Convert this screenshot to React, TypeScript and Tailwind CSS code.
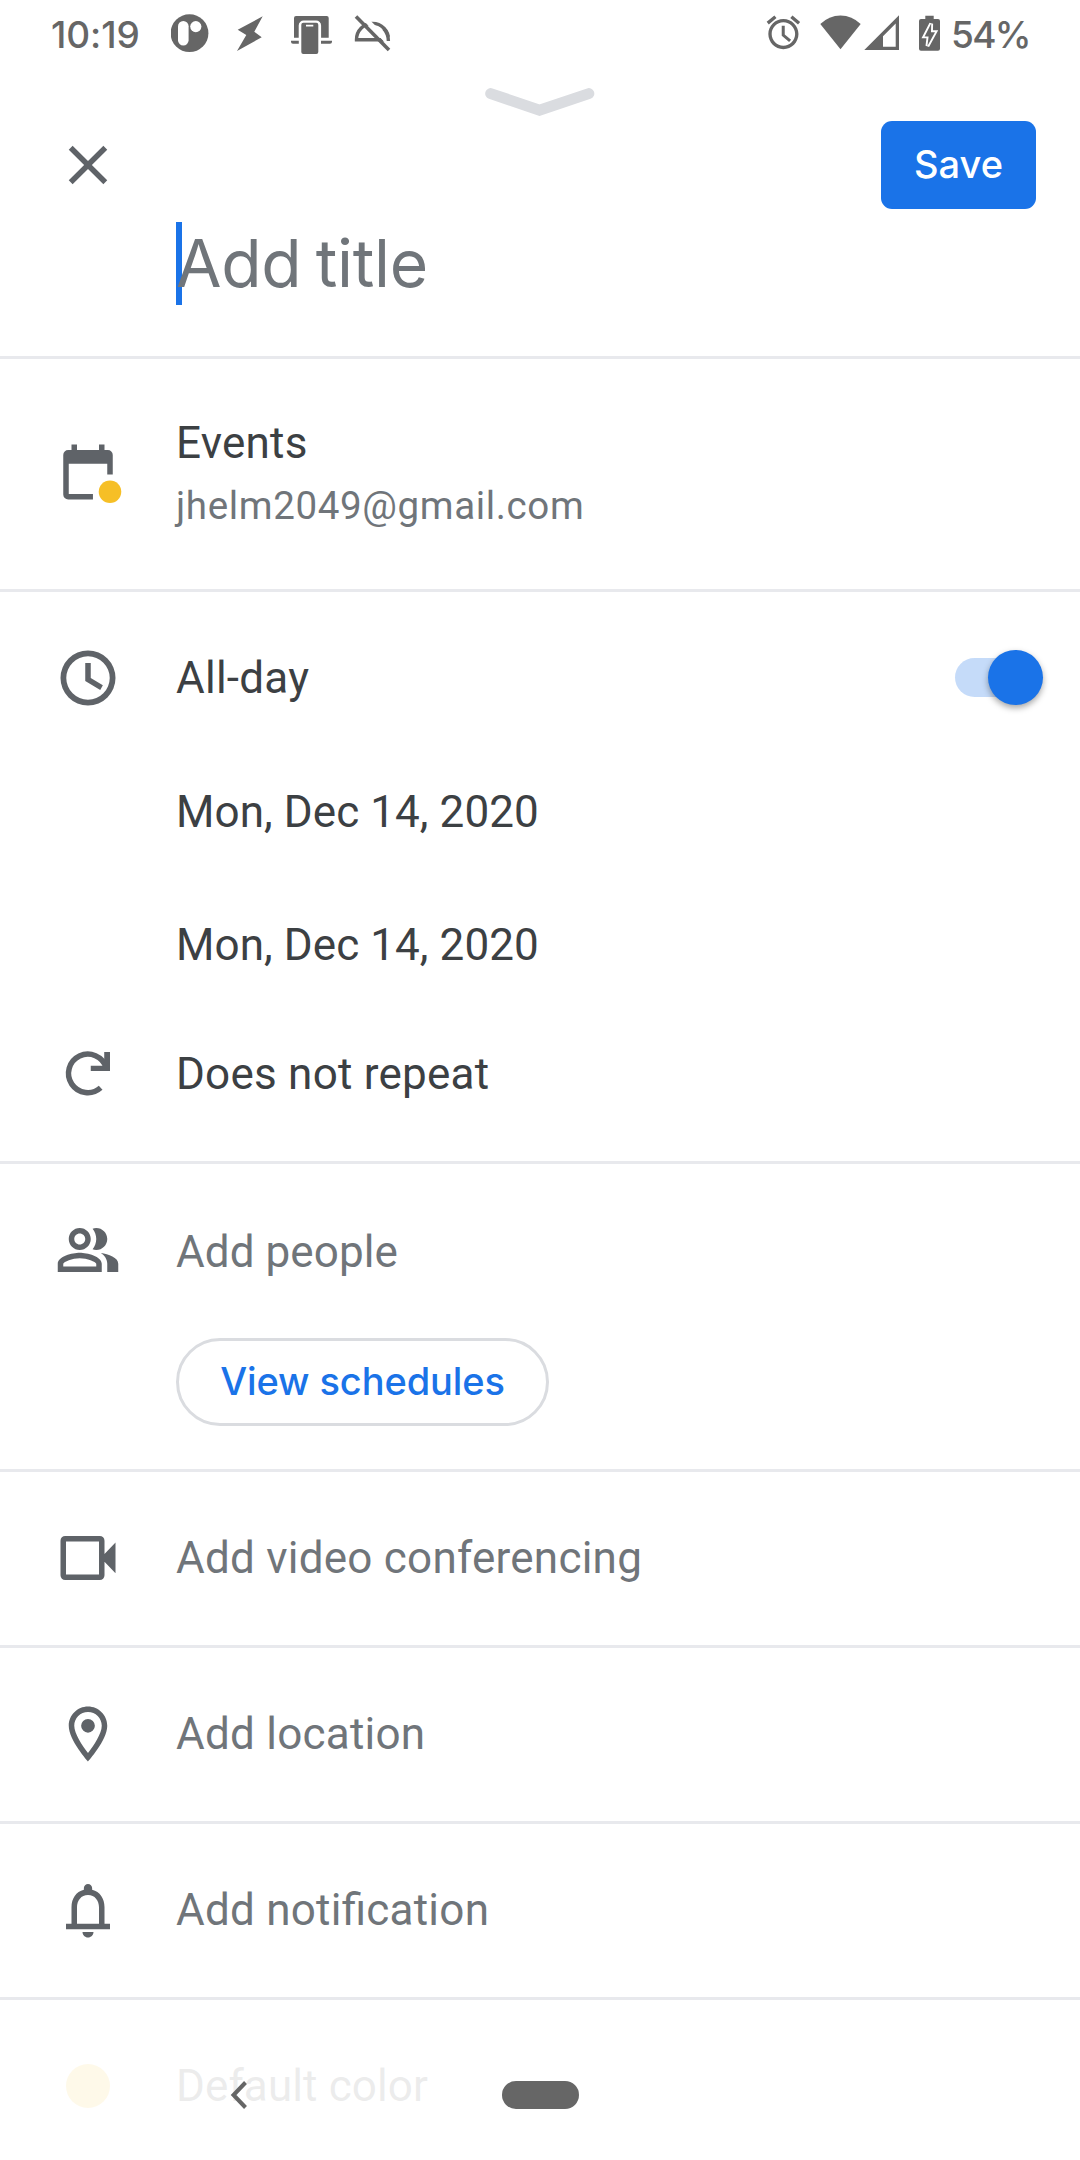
import type { ReactNode } from "react";

function Glyph({ d, className = "" }: { d: string; className?: string }) {
  return (
    <svg viewBox="0 0 24 24" className={`h-[66px] w-[66px] fill-[#5f6368] ${className}`}>
      <path fillRule="evenodd" d={d} />
    </svg>
  );
}

const icons = {
  close:
    "M19 6.41L17.59 5 12 10.59 6.41 5 5 6.41 10.59 12 5 17.59 6.41 19 12 13.41 17.59 19 19 17.59 13.41 12z",
  clock:
    "M12 2a10 10 0 1 0 0 20a10 10 0 1 0 0-20zM12 4.1a7.9 7.9 0 1 1 0 15.8a7.9 7.9 0 1 1 0-15.8zM11 6.5h2v5.5l4.4 2.6-.95 1.75L11 13.1z",
  people:
    "M16.67 13.13C18.04 14.06 19 15.32 19 17v3h4v-3c0-2.18-3.57-3.47-6.33-3.87zM15 12c2.21 0 4-1.79 4-4s-1.79-4-4-4c-.47 0-.91.1-1.33.24C14.5 5.27 15 6.58 15 8s-.5 2.73-1.33 3.76c.42.14.86.24 1.33.24zM9 12c2.21 0 4-1.79 4-4s-1.79-4-4-4-4 1.79-4 4 1.79 4 4 4zm0-6c1.1 0 2 .9 2 2s-.9 2-2 2-2-.9-2-2 .9-2 2-2zM9 13c-2.67 0-8 1.34-8 4v3h16v-3c0-2.66-5.33-4-8-4zm6 5H3v-.99C3.2 16.29 6.3 15 9 15s5.8 1.29 6 2v1z",
  video:
    "M3.7 4h12.6A1.7 1.7 0 0 1 18 5.7v4.8l4-4.1v11.1l-4-4.1v4.9a1.7 1.7 0 0 1-1.7 1.7H3.7A1.7 1.7 0 0 1 2 18.3V5.7A1.7 1.7 0 0 1 3.7 4zM4 6v12h12V6z",
  place:
    "M12 2C8.13 2 5 5.13 5 9c0 5.25 7 13 7 13s7-7.75 7-13c0-3.87-3.13-7-7-7zM7 9c0-2.76 2.24-5 5-5s5 2.24 5 5c0 2.88-2.88 7.19-5 9.88C9.92 16.21 7 11.85 7 9zM12 6.5a2.5 2.5 0 1 0 0 5a2.5 2.5 0 1 0 0-5z",
  bell:
    "M12 22c1.1 0 2-.9 2-2h-4c0 1.1.9 2 2 2zm6-5v-6c0-3.07-1.63-5.64-4.5-6.32V4c0-.83-.67-1.5-1.5-1.5s-1.5.67-1.5 1.5v.68C7.64 5.36 6 7.92 6 11v6H4v2h16v-2h-2zm-2 0H8v-6c0-2.48 1.51-4.5 4-4.5s4 2.02 4 4.5v6z",
};

function CalendarIcon() {
  return (
    <svg viewBox="0 0 24 24" className="h-[66px] w-[66px] overflow-visible">
      <path
        className="fill-[#5f6368]"
        fillRule="evenodd"
        d="M6 2h2v2h8V2h2v2h1.2A1.8 1.8 0 0 1 21 5.8v7.1h-2V9H5v11h8.8v2H4.8A1.8 1.8 0 0 1 3 20.2V5.8A1.8 1.8 0 0 1 4.8 4H6z"
      />
      <circle cx="20" cy="19.2" r="4.1" className="fill-[#f6bf26]" />
    </svg>
  );
}

function RepeatIcon() {
  return (
    <svg viewBox="0 0 24 24" className="h-[66px] w-[66px]">
      <path d="M16.6 17A7 7 0 1 1 18.6 9.7" fill="none" stroke="#5f6368" strokeWidth="2" />
      <path d="M17.9 4H20v6.95h-7V9h4.4l.5-1.4z" fill="#5f6368" />
    </svg>
  );
}

function StatusBar() {
  return (
    <div className="flex h-[69px] items-center font-[Inter,sans-serif] text-[37px] font-medium text-[#666666]">
      <span className="ml-[51px] w-[120px] whitespace-nowrap tracking-[-0.1px]">10:19</span>
      <svg viewBox="171 0 220 69" className="h-[69px] w-[220px]" fill="#666666">
        <circle cx="189.5" cy="33.2" r="18.9" />
        <rect x="178" y="21" width="10.6" height="24.6" rx="5.3" fill="#fff" />
        <circle cx="195.8" cy="26.6" r="5.6" fill="#fff" />
        <path d="M262.7 16.3L254.3 31.7 261.7 37.3 237 51 246.3 35 237.7 29.7z" />
        <path d="M296 16h30.7a2 2 0 0 1 2 2v19.7h-7.6V25.5a5 5 0 0 0-5-5h-12.4a5 5 0 0 0-5 5v12.2H294V18a2 2 0 0 1 2-2z" />
        <path d="M291 40.7h7.8v3H293a2 2 0 0 1-2-2zM321 40.7h11v1a2 2 0 0 1-2 2h-9z" />
        <path
          fillRule="evenodd"
          d="M303.3 22.7h13a2 2 0 0 1 2 2V52a2 2 0 0 1-2 2h-13a2 2 0 0 1-2-2V24.7a2 2 0 0 1 2-2zM306 24.7v1.7h7.3v-1.7z"
        />
        <path
          d="M356.5 39.7A16 16 0 0 1 372.5 23.4A16 16 0 0 1 388.5 39.7z"
          fill="none"
          stroke="#666666"
          strokeWidth="3.4"
        />
        <path d="M359.5 13L394 48" stroke="#fff" strokeWidth="5" />
        <path d="M377 34L391 48V37z" fill="#fff" />
        <path d="M383.6 28.5Q388.3 33.5 388.4 41" fill="none" stroke="#666666" strokeWidth="3.4" />
        <path d="M356 16.5L389 50" stroke="#666666" strokeWidth="3.6" />
      </svg>
      <svg viewBox="763 0 180 69" className="ml-[372px] h-[69px] w-[180px]" fill="#666666">
        <path
          transform="translate(763.3 12.3) scale(1.675)"
          d="M22 5.72l-4.6-3.86-1.29 1.53 4.6 3.86L22 5.72zM7.88 3.39L6.6 1.86 2 5.71l1.29 1.53 4.59-3.85zM12.8 8H11v6l4.4 3.7 1.2-1.3-3.8-3.2V8zM12 4c-4.97 0-9 4.03-9 9s4.02 9 9 9c4.97 0 9-4.03 9-9s-4.03-9-9-9zm0 16c-3.87 0-7-3.13-7-7s3.13-7 7-7 7 3.13 7 7-3.13 7-7 7z"
        />
        <path d="M840.5 49.3L820.3 24Q829 15.4 840.5 15.4T860.7 24z" />
        <path fillRule="evenodd" d="M899 15.3V50H864.3zM895.7 23.6L883 36.3V46.7H895.7z" />
        <path d="M925.3 15.7h8.4V19H938a2 2 0 0 1 2 2v27.7a2 2 0 0 1-2 2H921a2 2 0 0 1-2-2V21a2 2 0 0 1 2-2h4.3z" />
        <path
          d="M931.2 23.6L924.6 36.4H928.6L927.4 46 935 32.2H931z"
          stroke="#fff"
          strokeWidth="3.8"
          paintOrder="stroke"
        />
      </svg>
      <span className="ml-[8px] whitespace-nowrap tracking-[-1.7px]">54%</span>
    </div>
  );
}

function Section({ children, className = "" }: { children: ReactNode; className?: string }) {
  return <section className={`border-b-[3px] border-[#e8e9ed] ${className}`}>{children}</section>;
}

function Row({
  icon,
  children,
  className = "",
}: {
  icon?: ReactNode;
  children: ReactNode;
  className?: string;
}) {
  return (
    <div className={`flex items-center ${className}`}>
      <div className="ml-[55px] mr-[55px] w-[66px] shrink-0">{icon}</div>
      {children}
    </div>
  );
}

export default function App() {
  return (
    <main className="relative h-[2160px] w-[1080px] overflow-hidden bg-white font-[Roboto,sans-serif] text-[44px] leading-[52px] tracking-[0.24px] text-[#3c4043] [font-feature-settings:'liga'_1]">
      <StatusBar />

      <Section className="h-[290px] pt-[19px]">
        <svg viewBox="0 0 110 28" className="mx-auto block h-[28px] w-[110px]">
          <path
            d="M5.7 5.6L54.5 22.2 103.8 5.6"
            fill="none"
            stroke="#dadce0"
            strokeWidth="11"
            strokeLinecap="round"
          />
        </svg>
        <div className="mt-[5px] flex h-[88px] items-center justify-between pl-[55px] pr-[44px]">
          <Glyph d={icons.close} />
          <button className="h-[88px] w-[155px] rounded-[11px] bg-[#1a73e8] pb-[2px] font-[Inter,sans-serif] text-[38px] font-medium tracking-normal text-white">
            Save
          </button>
        </div>
        <div className="relative ml-[176px] flex h-[106px] items-center">
          <span className="absolute left-0 top-[13px] h-[83px] w-[6px] bg-[#1a73e8]" />
          <span className="relative pt-[2px] font-[Inter,sans-serif] text-[66px] leading-[80px] tracking-[-0.3px] text-[#70757a] [word-spacing:-4px]">
            Add title
          </span>
        </div>
      </Section>

      <Section className="h-[233px] pt-[57px]">
        <Row icon={<CalendarIcon />} className="h-[112px]">
          <div className="flex flex-col">
            <span className="mt-[5px]">Events</span>
            <span className="mt-[11px] text-[38.5px] tracking-[0.64px] text-[#70757a]">
              jhelm2049@gmail.com
            </span>
          </div>
        </Row>
      </Section>

      <Section className="h-[572px] pt-[20px]">
        <Row icon={<Glyph d={icons.clock} />} className="h-[131px] pr-[37px]">
          <span className="grow">All-day</span>
          <span className="flex h-[39px] w-[88px] items-center justify-end rounded-full bg-[linear-gradient(to_right,#c5dbf9_80px,transparent_80px)]">
            <span className="h-[55px] w-[55px] shrink-0 rounded-full bg-[#1a73e8] shadow-[0_3px_6px_rgba(0,0,0,0.35)]" />
          </span>
        </Row>
        <Row className="h-[137px]">
          <span className="tracking-[0.08px]">Mon, Dec 14, 2020</span>
        </Row>
        <Row className="h-[129px]">
          <span className="tracking-[0.08px]">Mon, Dec 14, 2020</span>
        </Row>
        <Row icon={<RepeatIcon />} className="h-[130px]">
          Does not repeat
        </Row>
      </Section>

      <Section className="h-[308px] pt-[20px]">
        <Row icon={<Glyph d={icons.people} />} className="h-[132px] text-[#70757a]">
          <span className="mt-[3px] tracking-[0.08px]">Add people</span>
        </Row>
        <button className="ml-[176px] mt-[22px] block h-[88px] w-[373px] rounded-full border-[3px] border-[#dadce0] pb-[2px] font-[Inter,sans-serif] text-[38px] font-medium tracking-[-0.1px] text-[#1a73e8]">
          View schedules
        </button>
      </Section>

      <Section>
        <Row icon={<Glyph d={icons.video} />} className="h-[173px] pb-[2px] text-[#70757a]">
          Add video conferencing
        </Row>
      </Section>
      <Section>
        <Row icon={<Glyph d={icons.place} />} className="h-[173px] pb-[2px] text-[#70757a]">
          Add location
        </Row>
      </Section>
      <Section>
        <Row icon={<Glyph d={icons.bell} />} className="h-[173px] pb-[2px] text-[#70757a]">
          Add notification
        </Row>
      </Section>
      <Row
        icon={<span className="mx-auto block h-[44px] w-[44px] rounded-full bg-[#f6bf26]" />}
        className="h-[173px] pb-[1px] tracking-[0.12px]"
      >
        Default color
      </Row>

      <nav className="absolute inset-x-0 bottom-0 flex h-[132px] bg-white/90">
        <svg viewBox="0 0 18 28" className="ml-[230px] mt-[53px] h-[28px] w-[18px]">
          <path d="M15.5 1.5L3.5 14 15.5 26.5" fill="none" stroke="#666666" strokeWidth="4" />
        </svg>
        <span className="ml-[254px] mt-[53px] h-[28px] w-[77px] rounded-full bg-[#666666]" />
      </nav>
    </main>
  );
}
